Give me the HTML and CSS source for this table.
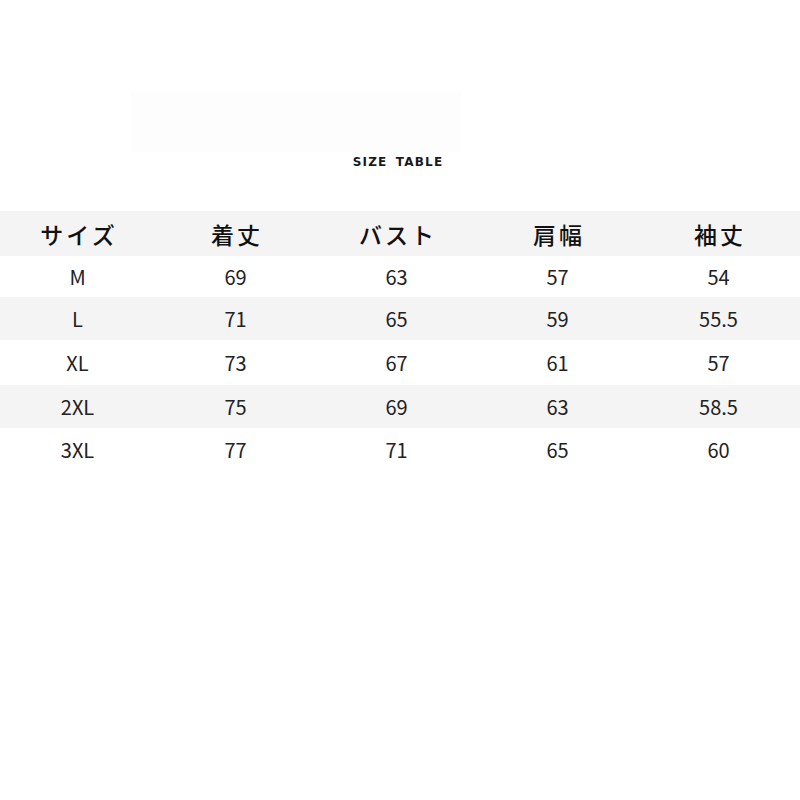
FILE: index.html
```html
<!DOCTYPE html>
<html lang="ja">
<head>
<meta charset="utf-8">
<title>SIZE TABLE</title>
<link rel="stylesheet" href="styles.css">
</head>
<body>
<div class="page">
  <div class="ghost"></div>
  <div class="title">SIZE TABLE</div>
  <div class="table">
    <div class="row head"><span>サイズ</span><span>着丈</span><span>バスト</span><span>肩幅</span><span>袖丈</span></div>
    <div class="row r1"><span>M</span><span>69</span><span>63</span><span>57</span><span>54</span></div>
    <div class="row r2 alt"><span>L</span><span>71</span><span>65</span><span>59</span><span>55.5</span></div>
    <div class="row r3"><span>XL</span><span>73</span><span>67</span><span>61</span><span>57</span></div>
    <div class="row r4 alt"><span>2XL</span><span>75</span><span>69</span><span>63</span><span>58.5</span></div>
    <div class="row r5"><span>3XL</span><span>77</span><span>71</span><span>65</span><span>60</span></div>
  </div>
</div>
</body>
</html>
```
FILE: styles.css
```css
html, body {
  margin: 0;
  padding: 0;
  background: #ffffff;
}
.page {
  width: 800px;
  height: 800px;
  padding-top: 92px;
  box-sizing: border-box;
  font-family: "Noto Sans CJK JP", "Noto Sans", sans-serif;
  color: #1e1e1e;
}
.ghost {
  margin-left: 130px;
  width: 332px;
  height: 60px;
  background: #fdfdfd;
}
.title {
  height: 59px;
  padding-top: 3px;
  padding-right: 4px;
  box-sizing: border-box;
  text-align: center;
  font-family: "DejaVu Sans", sans-serif;
  font-weight: 700;
  font-size: 12px;
  line-height: 14px;
  letter-spacing: 1.2px;
  word-spacing: 3px;
  color: #1a1a1a;
}
.table {
  display: flex;
  flex-direction: column;
}
.row {
  display: grid;
  grid-template-columns: 155px repeat(4, 161px);
  align-items: center;
  height: 43px;
  font-size: 20px;
  font-weight: 400;
  color: #222;
}
.row span {
  text-align: center;
}
.head {
  height: 45px;
  background: #f4f4f4;
  font-size: 23px;
  font-weight: 500;
  letter-spacing: 3px;
  color: #111;
}
.head span {
  padding-left: 3px;
}
.r1 { height: 41px; }
.r3 { height: 45px; }
.alt {
  background: #f4f4f4;
}
```
